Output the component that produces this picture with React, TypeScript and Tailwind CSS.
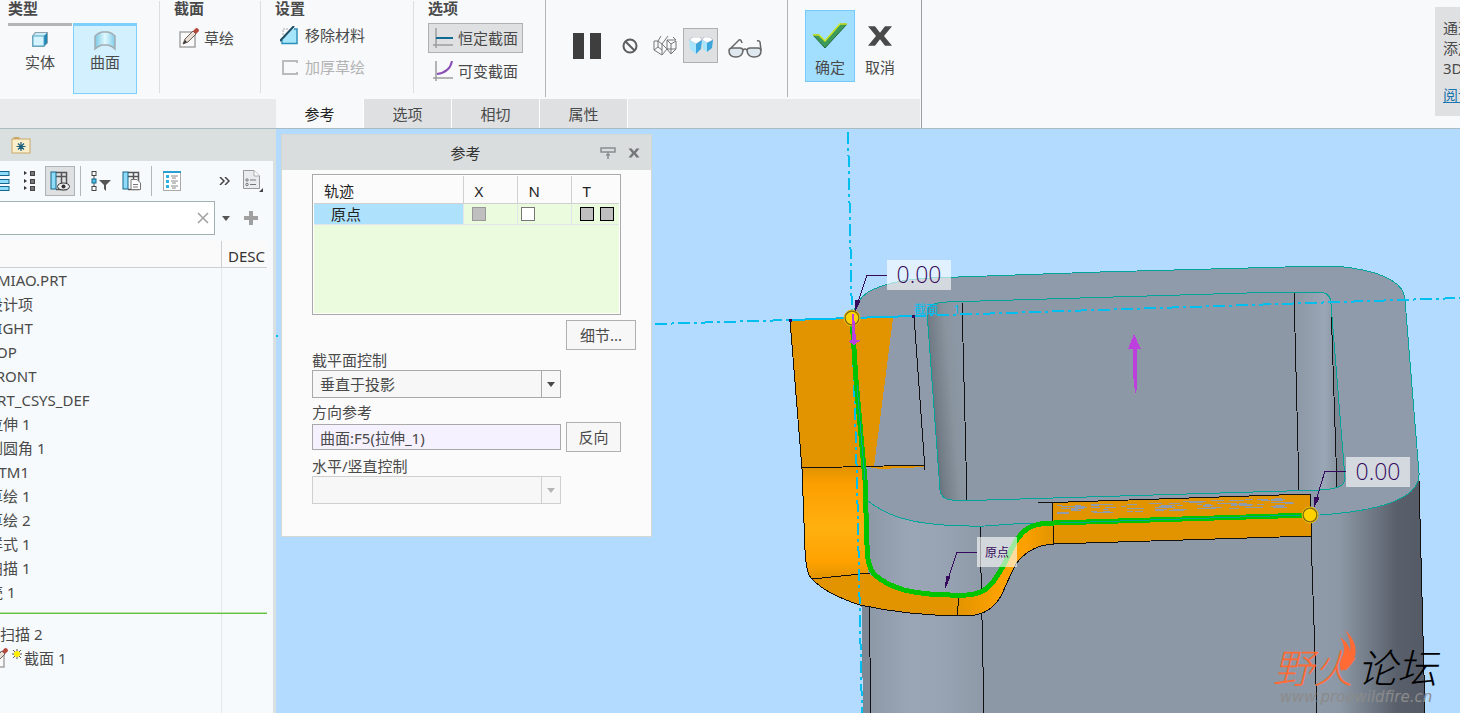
import React, { useState } from "react";
import clsx from "clsx";

const tabs = ["参考", "选项", "相切", "属性"];

const treeItems = [
  "设计项",
  "RIGHT",
  "TOP",
  "FRONT",
  "PRT_CSYS_DEF",
  "拉伸 1",
  "倒圆角 1",
  "DTM1",
  "草绘 1",
  "草绘 2",
  "样式 1",
  "扫描 1",
  "壳 1",
];

/* ---------- icons ---------- */

const SolidIcon = () => (
  <svg width="18" height="18" viewBox="0 0 18 18">
    <path d="M1 5 L4 1 H17 V12 L13 16 H1Z" fill="#8fa3ad" />
    <path d="M2 5 L5 2 H16 L13 5Z" fill="#c9ecf8" />
    <path d="M13 5 L16 2 V12 L13 15Z" fill="#1f86b5" />
    <rect x="2" y="5" width="11" height="10" fill="#d5f4ff" stroke="#4fa6c8" />
  </svg>
);

const SurfaceIcon = () => (
  <svg width="22" height="20" viewBox="0 0 22 20">
    <defs>
      <linearGradient id="surf" x1="0" x2="1" y1="0" y2="0">
        <stop offset="0" stopColor="#79c8e4" />
        <stop offset=".5" stopColor="#e2f9ff" />
        <stop offset="1" stopColor="#7fcdea" />
      </linearGradient>
    </defs>
    <path d="M1 18 V5 Q4 2 8 1 H14 Q18 2 21 5 V18 Q18 15 14 14 H8 Q4 15 1 18Z" fill="url(#surf)" stroke="#a2adb3" strokeWidth="1.5" />
  </svg>
);

const SketchIcon = () => (
  <svg width="20" height="20" viewBox="0 0 20 20" className="flex-none">
    <rect x="1" y="4" width="15" height="15" fill="#fafafa" stroke="#a5a5a5" strokeWidth="1.5" />
    <path d="M4 16 L6 11 L14 3 L17 6 L9 14Z" fill="#e9ded4" stroke="#6b5f58" />
    <path d="M4 16 L6 12 L8 14Z" fill="#333" />
    <path d="M14 3 L17 0 Q20 0 20 3 L17 6Z" fill="#b5493c" />
  </svg>
);

const RemoveMaterialIcon = () => (
  <svg width="19" height="19" viewBox="0 0 19 19">
    <path d="M3 9 V3 H9" fill="none" stroke="#aaa" strokeDasharray="2 1" />
    <path d="M3 16 V12 L13 3 H16.500 V17 H3Z" fill="#a6e6fa" />
    <path d="M14 3 H17 V17.500 H2 V14" fill="none" stroke="#2a8fbb" strokeWidth="1.5" />
    <path d="M0 15 L14 0" stroke="#1c4d63" strokeWidth="2" />
  </svg>
);

const ThickenIcon = () => (
  <svg width="19" height="19" viewBox="0 0 19 19">
    <path d="M17 5 V3 H3 V16 H17 V14" fill="none" stroke="#bbb" strokeWidth="2" />
  </svg>
);

const ConstantIcon = () => (
  <svg width="20" height="20" viewBox="0 0 20 20">
    <path d="M3 0 V20 M0 17 H20" stroke="#9d9d9d" strokeWidth="1.5" />
    <path d="M3 10 H20" stroke="#0f6a94" strokeWidth="2" />
  </svg>
);

const VariableIcon = () => (
  <svg width="20" height="20" viewBox="0 0 20 20">
    <path d="M3 0 V20 M0 17 H20" stroke="#9d9d9d" strokeWidth="1.5" />
    <path d="M4 13 Q17 11 19 0" fill="none" stroke="#8a4fb5" strokeWidth="2" />
  </svg>
);

const PauseIcon = () => (
  <svg width="28" height="28" viewBox="0 0 28 28">
    <rect x="0" y="1" width="11" height="26" fill="#3e3e3e" />
    <rect x="17" y="1" width="11" height="26" fill="#3e3e3e" />
  </svg>
);

const NoPreviewIcon = () => (
  <svg width="16" height="16" viewBox="0 0 16 16">
    <circle cx="8" cy="8" r="6.500" fill="none" stroke="#5c5c5c" strokeWidth="2" />
    <path d="M3.500 3.500 L12.500 12.500" stroke="#5c5c5c" strokeWidth="2" />
  </svg>
);

const WireIcon = () => (
  <svg width="24" height="22" viewBox="0 0 24 22">
    <path
      d="M1 6 H5 L8 1 M5 6 L9 9 L15 1 M9 9 V20 L1 15 V6 M1 15 L5 12 V6 M5 12 L9 15 M9 20 L14 14 V5 L18 9 L23 6 M14 5 H23 L20 2 M18 9 V19 L23 14 V6 M18 19 L14 14 L9 9 M14 14 H23"
      fill="none"
      stroke="#777"
    />
  </svg>
);

const ShadedIcon = () => (
  <svg width="24" height="18" viewBox="0 0 24 18">
    <path d="M0 3 L4 0 H11 L13 3 L7 7Z" fill="#fff" stroke="#9ab" strokeWidth=".6" />
    <path d="M0 3 L7 7 V17 L1 12Z" fill="#a8e4fb" />
    <path d="M7 7 L13 3 L12 12 L7 17Z" fill="#3ba5dc" />
    <path d="M13 3 L15 0 H21 L24 3 L18 6Z" fill="#fff" stroke="#9ab" strokeWidth=".6" />
    <path d="M13 3 L18 6 V15 L14 12Z" fill="#a8e4fb" />
    <path d="M18 6 L24 3 L23 11 L18 15Z" fill="#3ba5dc" />
  </svg>
);

const GlassesIcon = () => (
  <svg width="34" height="20" viewBox="0 0 34 20">
    <path d="M1 12 Q1 9 4 9 H12 Q15 9 15 12 Q14 18 8 18 Q1 18 1 12Z" fill="#dfe8ee" stroke="#666" strokeWidth="1.5" />
    <path d="M19 12 Q19 9 22 9 H30 Q33 9 33 12 Q33 18 26 18 Q20 18 19 12Z" fill="#dfe8ee" stroke="#666" strokeWidth="1.5" />
    <path d="M15 11 Q17 9 19 11 M3 9 L11 1 Q13 0 14 4 M33 11 L32 3 Q31 1 29 2" fill="none" stroke="#666" strokeWidth="1.5" />
  </svg>
);

const CheckIcon = () => (
  <svg width="36" height="26" viewBox="0 0 36 26">
    <path d="M1 12 L7 12 L13 18 L28 1 H35 L13 25Z" fill="#3d9b5c" stroke="#23693f" />
    <path d="M1 12 L7 12 L13 18 L28 1 H35" fill="none" stroke="#cfe820" strokeWidth="1.5" />
  </svg>
);

const CrossIcon = ({ size = 26, color = "#4a4a4a" }) => (
  <svg width={size} height={size} viewBox="0 0 26 24" preserveAspectRatio="none">
    <path d="M1 3 H8 L13 9 L18 3 H25 L17 12 L25 21 H18 L13 15 L8 21 H1 L9 12Z" fill={color} />
  </svg>
);

const FolderIcon = () => (
  <svg width="20" height="18" viewBox="0 0 20 18">
    <path d="M1 4 L3 1 H8 L10 4Z" fill="#caa66a" />
    <rect x="1" y="3" width="18" height="14" fill="#fbeecb" stroke="#c9a968" />
    <path d="M10 6 V15 M5.500 10.500 H14.500 M7 7.500 L13 13.500 M13 7.500 L7 13.500" stroke="#1b5f7d" strokeWidth="1.2" />
  </svg>
);

const BarsIcon = () => (
  <svg width="10" height="20" viewBox="0 0 10 20">
    {[0, 8, 15].map((y) => (
      <rect key={y} x="-6" y={y + 0.5} width="15" height="4" fill="#8edcf8" stroke="#14668c" />
    ))}
  </svg>
);

const ListDotsIcon = () => (
  <svg width="12" height="20" viewBox="0 0 12 20">
    {[0, 8, 15].map((y) => (
      <g key={y}>
        <path d={`M0 ${y} L3 ${y + 2} L0 ${y + 4}Z`} fill="#333" />
        <rect x="6.500" y={y + 0.5} width="4" height="4" fill="#777" stroke="#444" />
      </g>
    ))}
  </svg>
);

const ColumnsIcon = ({ kind = "eye" }) => (
  <svg width="20" height="20" viewBox="0 0 20 20">
    <path d="M6 1.500 H16.500 V18.500 H6 M6 5.500 H16 M11.500 1 V18" fill="none" stroke="#555" strokeWidth="1.5" />
    <rect x="1" y="1" width="5" height="17" fill="#8edcf8" stroke="#14668c" />
    {kind === "eye" && (
      <g>
        <ellipse cx="13.500" cy="15.500" rx="6" ry="3.500" fill="#eee" stroke="#333" />
        <circle cx="13.500" cy="15.500" r="2" fill="#333" />
      </g>
    )}
    {kind === "page" && (
      <path d="M9 8.500 H15 L18.500 12 V18.500 H9Z M11 13.500 H16 M11 16 H16" fill="#fff" stroke="#777" />
    )}
  </svg>
);

const FilterIcon = () => (
  <svg width="20" height="20" viewBox="0 0 20 20">
    <path d="M3 4 V16" stroke="#555" />
    <rect x="1" y=".5" width="4" height="4" fill="#fff" stroke="#444" />
    <rect x="1" y="8" width="4" height="4" fill="#4fc1ea" stroke="#14668c" />
    <rect x="1" y="15.500" width="4" height="4" fill="#fff" stroke="#444" />
    <path d="M8 9 H20 L15 14 V20 L13 18 V14Z" fill="#555" />
  </svg>
);

const DetailIcon = () => (
  <svg width="18" height="20" viewBox="0 0 18 20">
    <rect x=".5" y=".5" width="17" height="19" fill="#fff" stroke="#aaa" />
    <rect x="0" y="0" width="18" height="2" fill="#2b9fd0" />
    {[4, 9, 14].map((y) => (
      <g key={y}>
        <rect x="3" y={y} width="3" height="3" fill="#2cb0e5" />
        <path d={`M8 ${y + 1} H15 M9 ${y + 3} H13`} stroke="#888" />
      </g>
    ))}
  </svg>
);

const PageIcon = () => (
  <svg width="22" height="22" viewBox="0 0 22 22">
    <path d="M1.500 .5 H12 L17.500 6 V18.500 H1.500Z" fill="#e8ecef" stroke="#999" />
    <path d="M12 .5 V6 H17.500" fill="#fff" stroke="#aaa" />
    <circle cx="5" cy="10" r="1.200" fill="none" stroke="#777" />
    <circle cx="5" cy="14.500" r="1.200" fill="none" stroke="#777" />
    <path d="M8 10 H14 M8 14.500 H14" stroke="#777" />
    <path d="M21 18 V22 H17Z" fill="#444" />
  </svg>
);

const ArrowDown = ({ className = "" }) => (
  <svg width="8" height="5" viewBox="0 0 8 5" className={className}>
    <path d="M0 0 H8 L4 5Z" fill="currentColor" />
  </svg>
);

/* ---------- ribbon ---------- */

const Separator = ({ dark = false }) => (
  <div className={clsx("w-px flex-none", dark ? "h-[97px] bg-[#b2b4b6]" : "mt-px h-[92px] bg-[#dcdee0]")} />
);

const Group = ({ title, className, children }) => (
  <div className={clsx("flex-none", className)}>
    <h3 className="h-[23px] leading-[17px] font-bold text-[#4a4a4a]">{title}</h3>
    {children}
  </div>
);

const Ribbon = () => {
  const [tab, setTab] = useState("参考");

  return (
    <header className="flex h-[129px] flex-none border-b border-[#a9bcc4] bg-[#f8f9fb]">
      <div className="flex w-[922px] flex-none flex-col border-r border-[#9b9da0]">
        <div className="flex h-[99px]">
          <Group title="类型" className="w-[159px] pl-2">
            <div className="flex gap-px">
              <button className="flex h-[71px] w-16 flex-col items-center gap-[3px] border-t-[3px] border-[#b5b5b5] pt-[5px]">
                <SolidIcon />
                <span className="leading-5">实体</span>
              </button>
              <button className="flex h-[71px] w-16 flex-col items-center gap-px border border-t-[3px] border-[#7dd0fb] bg-[#d2f0fe] pt-[5px]">
                <SurfaceIcon />
                <span className="leading-5">曲面</span>
              </button>
            </div>
          </Group>
          <Separator />
          <Group title="截面" className="w-[100px] pl-[14px]">
            <button className="ml-[5px] flex h-[30px] items-center gap-[5px]">
              <SketchIcon />
              草绘
            </button>
          </Group>
          <Separator />
          <Group title="设置" className="w-[152px] pl-[14px]">
            <div className="ml-[5px] flex flex-col gap-1">
              <button className="flex h-[25px] items-center gap-[6px]">
                <RemoveMaterialIcon />
                移除材料
              </button>
              <button disabled className="flex h-[30px] items-center gap-[6px] text-[#b3b3b3]">
                <ThickenIcon />
                加厚草绘
              </button>
            </div>
          </Group>
          <Separator />
          <Group title="选项" className="w-[131px] pl-[14px]">
            <button className="flex h-[30px] w-[95px] items-center gap-[5px] border border-[#b0b0b0] bg-[#dfe0e2] pl-1">
              <ConstantIcon />
              恒定截面
            </button>
            <button className="mt-[3px] flex h-[30px] w-[95px] items-center gap-[5px] pl-[5px]">
              <VariableIcon />
              可变截面
            </button>
          </Group>
          <Separator dark />
          <div className="flex h-[91px] w-[241px] flex-none items-center pl-[27px]">
            <button aria-label="暂停">
              <PauseIcon />
            </button>
            <button aria-label="无预览" className="ml-[21px]">
              <NoPreviewIcon />
            </button>
            <button aria-label="分离" className="ml-[15px]">
              <WireIcon />
            </button>
            <button aria-label="连接" className="ml-[6px] flex h-[35px] w-[35px] items-center justify-center border border-[#b0b0b0] bg-[#dfe0e2]">
              <ShadedIcon />
            </button>
            <button aria-label="眼镜" className="mt-[6px] ml-[10px]">
              <GlassesIcon />
            </button>
          </div>
          <Separator dark />
          <div className="flex gap-1 pt-[10px] pl-[17px]">
            <button className="flex h-[72px] w-[50px] flex-col items-center justify-between border border-[#74cbfb] bg-[#a2dfff] pt-[12px] pb-1">
              <CheckIcon />
              <span className="leading-5">确定</span>
            </button>
            <button className="flex h-[72px] w-[42px] flex-col items-center justify-between pt-[13px] pb-[5px]">
              <CrossIcon />
              <span className="leading-5">取消</span>
            </button>
          </div>
        </div>
        <nav className="mr-px flex h-[29px] bg-[#e8eaeb] pl-[276px]">
          {tabs.map((name) => (
            <button
              key={name}
              onClick={() => setTab(name)}
              className={clsx(
                "w-[88px] border-r border-white pt-[2px]",
                tab === name ? "bg-[#f8f9fb] text-[#222]" : "bg-[#dfe0e2] text-[#4a4a4a]"
              )}
            >
              {name}
            </button>
          ))}
        </nav>
      </div>
      <aside className="mt-[7px] ml-auto h-[109px] w-[25px] overflow-hidden bg-[#dfe0e2] pt-[11px] pl-2 leading-5 whitespace-nowrap">
        <p>通过</p>
        <p>添加</p>
        <p>3D</p>
        <a href="#read" className="mt-[7px] block text-[#1c74ac] underline">
          阅读
        </a>
      </aside>
    </header>
  );
};

/* ---------- model tree ---------- */

const ModelTree = () => (
  <aside className="flex w-[276px] flex-none flex-col overflow-hidden bg-[#dadfdf]">
    <div className="flex h-8 flex-none items-center pl-[11px]">
      <FolderIcon />
    </div>
    <div className="mr-[3px] flex flex-1 flex-col bg-[#f7fafc]">
      <div className="flex h-10 flex-none items-center">
        <button aria-label="显示">
          <BarsIcon />
        </button>
        <button aria-label="展开" className="ml-[14px]">
          <ListDotsIcon />
        </button>
        <button aria-label="列显示" className="ml-[9px] flex h-[30px] w-[30px] items-center justify-center border border-[#aeb4b6] bg-[#dfe0e2]">
          <ColumnsIcon />
        </button>
        <div className="ml-[5px] h-[30px] w-px bg-[#b3b7b9]" />
        <button aria-label="过滤器" className="ml-[10px]">
          <FilterIcon />
        </button>
        <button aria-label="树列" className="ml-[11px]">
          <ColumnsIcon kind="page" />
        </button>
        <div className="ml-[9px] h-[30px] w-px bg-[#b3b7b9]" />
        <button aria-label="详细信息" className="ml-[11px]">
          <DetailIcon />
        </button>
        <button aria-label="更多" className="ml-[38px]">
          <svg width="11" height="8" viewBox="0 0 11 8">
            <path d="M1 0 L5 4 L1 8 M6 0 L10 4 L6 8" fill="none" stroke="#444" strokeWidth="1.5" />
          </svg>
        </button>
        <button aria-label="设置" className="ml-[12px]">
          <PageIcon />
        </button>
      </div>
      <div className="flex h-[34px] flex-none items-center">
        <div className="flex h-[34px] w-[215px] items-center border border-l-0 border-[#a3b0b2] bg-white pr-[5px]">
          <input aria-label="搜索" className="h-full min-w-0 flex-1 px-2 outline-none" />
          <button aria-label="清除">
            <svg width="12" height="12" viewBox="0 0 12 12">
              <path d="M1 1 L11 11 M11 1 L1 11" stroke="#a0a0a0" strokeWidth="1.5" />
            </svg>
          </button>
        </div>
        <ArrowDown className="ml-[7px] text-[#555]" />
        <button aria-label="添加" className="ml-[14px]">
          <svg width="14" height="14" viewBox="0 0 14 14">
            <path d="M7 0 V14 M0 7 H14" stroke="#a0a0a0" strokeWidth="4" />
          </svg>
        </button>
      </div>
      <div className="mt-[6px] mr-[6px] flex h-[27px] flex-none border-b border-[#ccd0d2] bg-[#fafafa] text-[#333]">
        <div className="w-[222px] flex-none border-r border-[#ccd0d2]" />
        <div className="pl-[6px] leading-[30px]">DESC</div>
      </div>
      <div className="mr-[6px] flex flex-1">
        <div className="w-[222px] flex-none border-r border-[#e4e8ea] whitespace-nowrap">
          <ul className="leading-6">
            <li className="-ml-[3px]">MIAO.PRT</li>
            {treeItems.map((item) => (
              <li key={item} className="-ml-3">
                {item}
              </li>
            ))}
          </ul>
          <div className="-mr-[46px] mt-2 h-[2px] border-t border-[#b4e2a4] bg-[#63c142]" />
          <ul className="mt-2 leading-6">
            <li>扫描 2</li>
            <li className="-ml-3 flex items-center">
              <SketchIcon />
              <svg width="10" height="10" viewBox="0 0 10 10" className="mr-[2px] mb-2 ml-1">
                <path d="M5 0 V10 M0 5 H10 M1 1 L9 9 M9 1 L1 9" stroke="#555" />
                <circle cx="5" cy="5" r="3" fill="#ffee00" />
              </svg>
              截面 1
            </li>
          </ul>
        </div>
      </div>
    </div>
  </aside>
);

/* ---------- reference panel ---------- */

const Box = ({ label, className }) => (
  <input type="checkbox" aria-label={label} className={clsx("block h-[14px] w-[14px] flex-none appearance-none border", className)} />
);

const SelectBox = ({ id, options, disabled = false }) => (
  <div className={clsx("relative h-7 w-[249px] border bg-[#f7f7f7]", disabled ? "border-[#cfcfcf] text-[#b5b5b5]" : "border-[#a9a9a9]")}>
    <select id={id} disabled={disabled} className="h-full w-full appearance-none pl-[7px] outline-none">
      {options.map((o) => (
        <option key={o}>{o}</option>
      ))}
    </select>
    <div
      className={clsx(
        "pointer-events-none absolute top-0 right-0 flex h-full w-[19px] items-center justify-center border-l",
        disabled ? "border-[#cfcfcf]" : "border-[#a9a9a9]"
      )}
    >
      <ArrowDown />
    </div>
  </div>
);

const ReferencePanel = () => (
  <section className="absolute top-[5px] left-[5px] w-[371px] border border-[#d5d9d6] bg-[#fbfbfb]">
    <div className="flex h-[35px] items-center bg-[#dadddd] pr-[11px] text-[#333]">
      <h2 className="flex-1 pt-px pl-[49px] text-center">参考</h2>
      <button aria-label="固定" className="mr-3">
        <svg width="16" height="12" viewBox="0 0 16 12">
          <path d="M1 1 H15 V5 H1Z M8 5 V12 M6 8 H10" fill="none" stroke="#8a8d90" strokeWidth="1.5" />
        </svg>
      </button>
      <button aria-label="关闭">
        <CrossIcon size={12} color="#747679" />
      </button>
    </div>
    <div className="px-[30px] pt-1 pb-8">
      <div className="h-[141px] w-[309px] border border-[#a9a9a9] bg-white p-px">
        <div className="h-full bg-[#eafcdd]">
          <table className="w-full table-fixed border-collapse text-[#222]">
            <thead>
              <tr className="h-[27px] border-b border-[#d0d0d0] bg-[#fbfbfb] text-left">
                <th className="w-[149px] pt-1 pl-[10px] leading-5 font-normal">轨迹</th>
                <th className="w-[54px] border-l border-[#d0d0d0] pt-1 pl-[11px] leading-5 font-normal">X</th>
                <th className="w-[54px] border-l border-[#d0d0d0] pt-1 pl-[11px] leading-5 font-normal">N</th>
                <th className="border-l border-[#d0d0d0] pt-1 pl-[11px] leading-5 font-normal">T</th>
              </tr>
            </thead>
            <tbody>
              <tr className="h-[21px] border-b border-[#e4e4ec]">
                <td className="bg-[#aee1fc] pl-[17px] leading-5">原点</td>
                <td className="border-l border-[#e4e4ec] pl-2">
                  <Box label="X" className="border-[#999] bg-[#bfbfbf]" />
                </td>
                <td className="border-l border-[#e4e4ec] pl-[3px]">
                  <Box label="N" className="border-[#777] bg-white" />
                </td>
                <td className="border-l border-[#e4e4ec] pl-2">
                  <div className="flex gap-[6px]">
                    <Box label="T 1" className="border-black bg-[#bfbfbf]" />
                    <Box label="T 2" className="border-black bg-[#bfbfbf]" />
                  </div>
                </td>
              </tr>
            </tbody>
          </table>
        </div>
      </div>
      <button className="mt-[5px] ml-[254px] block h-[30px] w-[70px] border border-[#b0b0b0] bg-[#f7f7f7]">细节...</button>
      <label htmlFor="plane" className="block h-5 leading-5">
        截平面控制
      </label>
      <SelectBox id="plane" options={["垂直于投影", "垂直于轨迹", "恒定法向"]} />
      <label htmlFor="direction" className="mt-1 block h-5 leading-5">
        方向参考
      </label>
      <div className="flex h-[30px] items-center gap-[5px]">
        <input
          id="direction"
          defaultValue="曲面:F5(拉伸_1)"
          className="h-[26px] w-[249px] border border-[#a9a9a9] bg-[#f5f1fe] pl-[7px] outline-none"
        />
        <button className="h-[30px] w-[55px] border border-[#b0b0b0] bg-[#f7f7f7]">反向</button>
      </div>
      <label htmlFor="horizontal" className="mt-1 block h-5 leading-5">
        水平/竖直控制
      </label>
      <SelectBox id="horizontal" options={[""]} disabled />
    </div>
  </section>
);

/* ---------- model view ---------- */

// gaps in the orange strip where the two faces overlap
const streaks = Array.from({ length: 90 }, (_, i) => {
  const x = 1057 + ((i * 67 + i * i * 3) % 238);
  const row = (i * 7 + i * i) % 13;
  const y = 505 + row - Math.round((x - 1057) * 0.03);
  return { x, y, w: 5 + ((i * 11) % 10) };
});

const guide =
  "M852 318 L856 380 L865 480 L867 545 Q867 566 874 574 Q884 584 904 590 Q928 596 967 595 Q984 594 993 582 Q1002 570 1012 548 Q1021 530 1033 526 Q1040 523 1054 523 L1310 515";

const Callout = ({ x, y, w, children }) => (
  <g>
    <rect x={x} y={y} width={w} height="30" fill="#fff" fillOpacity=".62" />
    {children}
  </g>
);

const Viewport = () => (
  <svg
    className="absolute inset-0 h-full w-full"
    viewBox="276 129 1184 584"
    preserveAspectRatio="xMidYMid slice"
    shapeRendering="crispEdges"
    fill="none"
  >
    <defs>
      <linearGradient id="leftRound" gradientUnits="userSpaceOnUse" x1="868" x2="990" y1="0" y2="0">
        <stop offset="0" stopColor="#8d98a7" />
        <stop offset=".35" stopColor="#9aa6b6" />
        <stop offset=".6" stopColor="#98a4b3" />
        <stop offset="1" stopColor="#8c98a5" />
      </linearGradient>
      <linearGradient id="rightRound" gradientUnits="userSpaceOnUse" x1="1311" x2="1425" y1="0" y2="0">
        <stop offset="0" stopColor="#8f9ba8" />
        <stop offset=".25" stopColor="#8d98a6" />
        <stop offset=".5" stopColor="#737d89" />
        <stop offset=".75" stopColor="#59606b" />
        <stop offset="1" stopColor="#555b66" />
      </linearGradient>
      <linearGradient id="pocketLeft" gradientUnits="userSpaceOnUse" x1="928" x2="962" y1="400" y2="397">
        <stop offset="0" stopColor="#5f6873" />
        <stop offset=".25" stopColor="#727d88" />
        <stop offset=".7" stopColor="#89949f" />
        <stop offset="1" stopColor="#8c98a5" />
      </linearGradient>
      <linearGradient id="pocketRight" gradientUnits="userSpaceOnUse" x1="1296" x2="1334" y1="0" y2="0">
        <stop offset="0" stopColor="#8c98a5" />
        <stop offset=".75" stopColor="#9aa6b6" />
        <stop offset="1" stopColor="#8c98a5" />
      </linearGradient>
      <linearGradient id="orangeRound" gradientUnits="userSpaceOnUse" x1="0" x2="0" y1="467" y2="578">
        <stop offset="0" stopColor="#e09200" />
        <stop offset=".15" stopColor="#fc9f00" />
        <stop offset=".55" stopColor="#ffb010" />
        <stop offset=".85" stopColor="#ffa200" />
        <stop offset="1" stopColor="#e29400" />
      </linearGradient>
      <linearGradient id="orangeBend" gradientUnits="userSpaceOnUse" x1="958" x2="1054" y1="0" y2="0">
        <stop offset="0" stopColor="#e29400" />
        <stop offset=".45" stopColor="#ffa200" />
        <stop offset=".7" stopColor="#fba000" />
        <stop offset="1" stopColor="#e29400" />
      </linearGradient>
    </defs>

    {/* body */}
    <path d="M860 500 L869 500 L871 713 H863Z" fill="#7d8894" />
    <path d="M866 495 L980 500 L984 713 H871Z" fill="url(#leftRound)" />
    <path d="M980 500 H1311 L1317 713 H984Z" fill="#8c98a5" />
    <path d="M1311 500 L1419 475 L1425 713 H1317Z" fill="url(#rightRound)" />
    <path d="M869 600 L871 713 M980 525 L984 713 M1311 536 L1317 713 M1419 480 L1425 713" stroke="#111" />

    {/* top face */}
    <path
      d="M852 318 Q855 301 868 292 Q890 280 930 278 L1100 272 L1285 267 Q1335 265 1352 268 Q1404 276 1405 300 L1419 473 Q1421 508 1320 515 L1013 524 L985 526 Q925 527 895 516 Q877 509 867 500Z"
      fill="#8f9bab"
      stroke="#00a59a"
    />

    {/* pocket */}
    <path
      d="M927 312 Q927 303 947 302 L1280 292 H1318 Q1331 292 1331 304 L1345 478 Q1346 489 1320 490 L987 500 H952 Q941 499 940 490Z"
      fill="#8c98a5"
    />
    <path d="M927 312 Q927 303 947 302 L962 302 L967 500 H952 Q941 499 940 490Z" fill="url(#pocketLeft)" />
    <path d="M1294 292 H1318 Q1331 292 1331 304 L1337 488 L1299 491Z" fill="url(#pocketRight)" />
    <path d="M1331 304 L1345 478 Q1345 487 1337 488Z" fill="#7d8894" />
    <path d="M962 302 L967 500 M1294 292 L1299 490 M1331 304 L1337 488" stroke="#111" />
    <path
      d="M927 312 Q927 303 947 302 L1280 292 H1318 Q1331 292 1331 304 L1345 478 Q1346 489 1320 490 L987 500 H952 Q941 499 940 490Z"
      stroke="#00a59a"
    />

    {/* swept surface */}
    <path d="M790 320 L893 318 L874 467 L802 469Z" fill="#e29400" />
    <path d="M868 467 L925 465 L925 467 L880 469Z" fill="#e29400" />
    <path d="M802 469 L865 467 L867 545 L868 574 L812 579 Q805 572 805 550Z" fill="url(#orangeRound)" />
    <path d="M812 579 L868 573 Q880 584 904 590 Q928 596 961 596 L957 616 Q910 616 860 605 Q826 594 812 579Z" fill="#e29400" />
    <path
      d="M961 596 Q984 594 993 582 Q1002 570 1012 548 Q1021 530 1033 526 Q1040 523 1054 523 V544 Q1032 543 1016 564 Q1008 580 1004 590 Q994 617 957 616Z"
      fill="url(#orangeBend)"
    />
    <path d="M1052 502 L1310 494 L1312 536 L1054 544Z" fill="#e29400" />
    {streaks.map((s, i) => (
      <path key={i} d={`M${s.x} ${s.y + 0.5} h${s.w}`} stroke="#8f9bab" />
    ))}
    <path
      d="M790 320 L802 469 L805 550 Q806 574 812 579 Q826 594 860 605 Q910 616 967 616 Q992 615 1002 594 Q1008 580 1016 564 Q1030 545 1054 544 L1312 536 L1310 494 L1038 503 M1052 502 L1054 544 M802 468 L925 465 M914 316 L925 470 M812 579 L870 573 M959 597 L957 616"
      stroke="#111"
    />

    {/* datum planes */}
    <path d="M655 324 L790 320 M914 316 L1460 298" stroke="#00bfee" strokeWidth="2" strokeDasharray="12 4 3 4" />
    <path d="M790 320 L914 316" stroke="#00bfee" strokeWidth="2" />
    <path d="M848 132 L852 318 L857 480 L862 713" stroke="#00bfee" strokeWidth="2" strokeDasharray="12 4 3 4" />
    <path d="M276 336 h2" stroke="#00bfee" strokeWidth="2" />
    <path d="M789 319 h3 v3 h-3Z M912 315 h3 v3 h-3Z" fill="#350a5c" />
    <text x="914" y="314" fontSize="12" fill="#00bfee">
      {"截面\u00a0\u00a0\u00a0\u00a0\u00a01"}
    </text>

    {/* trajectory */}
    <path d={guide} stroke="#00c400" strokeWidth="5" strokeLinejoin="round" />
    <path d="M857 385 L865 480 M1060 523 L1300 515" stroke="#00a59a" />

    <g shapeRendering="auto">
      <circle cx="852" cy="318" r="7" fill="#ffd200" stroke="#7d6a10" strokeWidth="1.5" />
      <circle cx="852" cy="318" r="8" stroke="#f0bd10" />
      <circle cx="1310" cy="515" r="7" fill="#ffd200" stroke="#7d6a10" strokeWidth="1.5" />
      <circle cx="1310" cy="515" r="8" stroke="#f0bd10" />
    </g>

    <path d="M852 314 L854 314 L856 340 L861 340 L854 345 L848 341 L852 340Z" fill="#bd3fdd" />
    <path d="M1134 334 L1141 349 H1137 V388 L1136 393 H1135 L1133 374 V349 H1128Z" fill="#bd3fdd" />

    {/* callouts */}
    <path d="M887 275 H867 L855 311 M977 552 H957 L945 588 M1346 471 H1325 L1314 507" stroke="#350a5c" />
    <path d="M856 300 L860 301 L855 311Z M947 576 L950 577 L945 588Z M1315 497 L1319 498 L1314 507Z" fill="#350a5c" stroke="#350a5c" />
    <g fill="#350a5c" className="font-['Open_Sans'] font-light">
      <Callout x={887} y={260} w={64}>
        <text x="919" y="283" fontSize="23" textAnchor="middle">0.00</text>
      </Callout>
      <Callout x={1346} y={457} w={64}>
        <text x="1378" y="480" fontSize="23" textAnchor="middle">0.00</text>
      </Callout>
    </g>
    <Callout x={977} y={537} w={40}>
      <text x="997" y="557" fontSize="12" fill="#350a5c" textAnchor="middle">原点</text>
    </Callout>

    {/* forum mark */}
    <text x="1356" y="702" fontSize="15" fill="#8b8b8b" textAnchor="middle" className="font-['DejaVu_Sans'] italic">
      www.proewildfire.cn
    </text>
    <g shapeRendering="auto" className="font-['Noto_Sans_CJK_SC'] font-light italic">
      <text x="1273" y="683" fontSize="40" fill="#ff6a35">野火</text>
      <text x="1357" y="683" fontSize="40" fill="#000">论坛</text>
      <path d="M1345 630 Q1358 642 1355 656 Q1352 668 1341 671 Q1338 662 1343 655 Q1346 647 1340 637 Q1350 644 1350 652 Q1352 641 1345 630Z" fill="#ff6a35" />
    </g>
  </svg>
);

const App = () => {
  return (
    <div className="flex h-screen flex-col overflow-hidden bg-[#f8f9fb] font-['Noto_Sans','Noto_Sans_CJK_SC',sans-serif] text-[15px] text-[#4a4a4a]">
      <Ribbon />
      <div className="flex min-h-0 flex-1">
        <ModelTree />
        <main className="relative min-w-0 flex-1 overflow-hidden bg-[#b3daff]">
          <Viewport />
          <ReferencePanel />
        </main>
      </div>
    </div>
  );
};

export default App;
